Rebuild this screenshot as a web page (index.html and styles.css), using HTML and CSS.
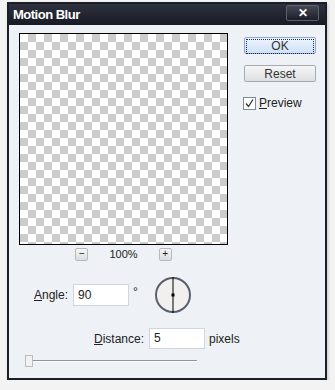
FILE: index.html
```html
<!DOCTYPE html>
<html lang="en">

<head>
    <meta charset="utf-8" />
    <title>Motion Blur</title>
    <link rel="stylesheet" href="styles.css">
</head>

<body>
    <div class="window">
        <div class="titlebar">
            <span class="title">Motion Blur</span>
            <button type="button" class="close">&#x2715;</button>
        </div>

        <div class="content">
            <div class="top">
                <div class="left">
                    <div class="preview"></div>
                    <div class="zoom-row">
                        <button type="button" class="zoom-btn">&minus;</button>
                        <span class="zoom-value">100%</span>
                        <button type="button" class="zoom-btn">+</button>
                    </div>
                </div>

                <div class="side">
                    <button type="button" class="btn btn-default"><span class="focus">OK</span></button>
                    <button type="button" class="btn">Reset</button>
                    <label class="check">
                        <span class="box">
                            <svg width="11" height="11" viewBox="0 0 11 11">
                                <path d="M2 5.5 L4.5 8.5 L9 1.5" fill="none" stroke="#333" stroke-width="1.3" />
                            </svg>
                        </span>
                        <span><u>P</u>review</span>
                    </label>
                </div>
            </div>

            <div class="angle-row">
                <label class="field-label"><u>A</u>ngle:</label>
                <div class="field">90</div>
                <span class="unit-deg">&deg;</span>
                <svg class="dial" width="38" height="38" viewBox="0 0 38 38">
                    <circle cx="19" cy="19" r="17" fill="#f1f0ee" stroke="#5a5f6e" stroke-width="2" />
                    <line x1="19" y1="1" x2="19" y2="37" stroke="#000" stroke-width="1" />
                    <rect x="17.5" y="17.5" width="3" height="3" fill="#000" />
                </svg>
            </div>

            <div class="distance-row">
                <label class="field-label"><u>D</u>istance:</label>
                <div class="field">5</div>
                <span class="unit">pixels</span>
            </div>

            <div class="slider">
                <div class="track"></div>
                <div class="thumb"></div>
            </div>
        </div>
    </div>
</body>

</html>
```

FILE: styles.css
```css
body {
    margin: 0;
    background-color: #f3f3f3;
    font-family: "Liberation Sans", Arial, sans-serif;
    font-size: 12px;
    color: #222;
}

.window {
    margin: 2px 0 0 7px;
    width: 316px;
    height: 374px;
    border: 2px solid #1d1f28;
    background-color: #eef1f6;
    box-shadow: 1px 2px 3px rgba(0, 0, 0, 0.18);
    display: flex;
    flex-direction: column;
}

.titlebar {
    height: 21px;
    background: linear-gradient(#2e313e, #181b25);
    display: flex;
    align-items: center;
    justify-content: space-between;
    padding: 0 6px 0 4px;
}

.title {
    color: #fff;
    font-weight: bold;
    font-size: 13px;
    letter-spacing: -0.5px;
}

.close {
    width: 33px;
    height: 16px;
    border: 1px solid #5c606c;
    border-radius: 2px;
    background: linear-gradient(#464955, #1c1e27);
    color: #fff;
    font-size: 12px;
    font-weight: bold;
    line-height: 13px;
    padding: 0;
    margin-top: -3px;
}

.content {
    padding: 8px 0 0 10px;
}

.top {
    display: flex;
}

.left {
    width: 209px;
}

.preview {
    width: 207px;
    height: 210px;
    border: 1px solid #000;
    background-color: #fff;
    background-image: conic-gradient(#cccccc 25%, #fff 0 50%, #cccccc 0 75%, #fff 0);
    background-size: 16px 16px;
}

.zoom-row {
    display: flex;
    justify-content: center;
    align-items: center;
    gap: 21px;
    margin-top: 2px;
    height: 14px;
}

.zoom-btn {
    width: 13px;
    height: 13px;
    padding: 0;
    border: 1px solid #b5b9c2;
    border-radius: 2px;
    background: linear-gradient(#f7f7f7, #dcdde0);
    font-size: 10px;
    line-height: 10px;
    color: #222;
}

.zoom-value {
    font-size: 11px;
}

.side {
    margin-left: 16px;
    padding-top: 4px;
    display: flex;
    flex-direction: column;
    gap: 11px;
}

.btn {
    width: 72px;
    height: 17px;
    padding: 0;
    border: 1px solid #a5a9b1;
    border-radius: 2px;
    background: linear-gradient(#f6f6f6, #dedfe2);
    font-family: inherit;
    font-size: 12px;
    color: #333;
    line-height: 14px;
}

.btn-default {
    border-color: #8aa8d6;
    background: linear-gradient(#eef5fe, #cfe0f7);
    padding: 1px;
}

.focus {
    display: block;
    height: 13px;
    border: 1px dotted #1c2a4c;
    line-height: 13px;
}

.check {
    display: flex;
    align-items: center;
    gap: 3px;
    margin-top: 3px;
    margin-left: -1px;
    font-size: 12px;
}

.box {
    width: 11px;
    height: 11px;
    border: 1px solid #808896;
    background-color: #fff;
    display: flex;
}

.angle-row {
    display: flex;
    align-items: center;
    margin: 15px 0 0 15px;
    height: 38px;
}

.field-label {
    margin-right: 5px;
}

.field {
    width: 50px;
    height: 20px;
    border: 1px solid #cfd6e0;
    background-color: #fff;
    padding-left: 4px;
    line-height: 20px;
}

.unit-deg {
    margin: -6px 0 0 4px;
    width: 20px;
}

.dial {
    margin-left: 1px;
}

.distance-row {
    display: flex;
    align-items: center;
    margin: 14px 0 0 75px;
    height: 21px;
}

.distance-row .field {
    height: 19px;
    line-height: 19px;
}

.unit {
    margin-left: 4px;
}

.slider {
    position: relative;
    margin: 6px 0 0 6px;
    width: 172px;
    height: 11px;
}

.track {
    position: absolute;
    left: 0;
    right: 0;
    top: 5px;
    height: 1px;
    background-color: #8e939c;
    border-bottom: 1px solid #fff;
}

.thumb {
    position: absolute;
    left: 0;
    top: 0;
    width: 6px;
    height: 10px;
    border: 1px solid #b9bcc2;
    background-color: #f2f2f2;
}
```
